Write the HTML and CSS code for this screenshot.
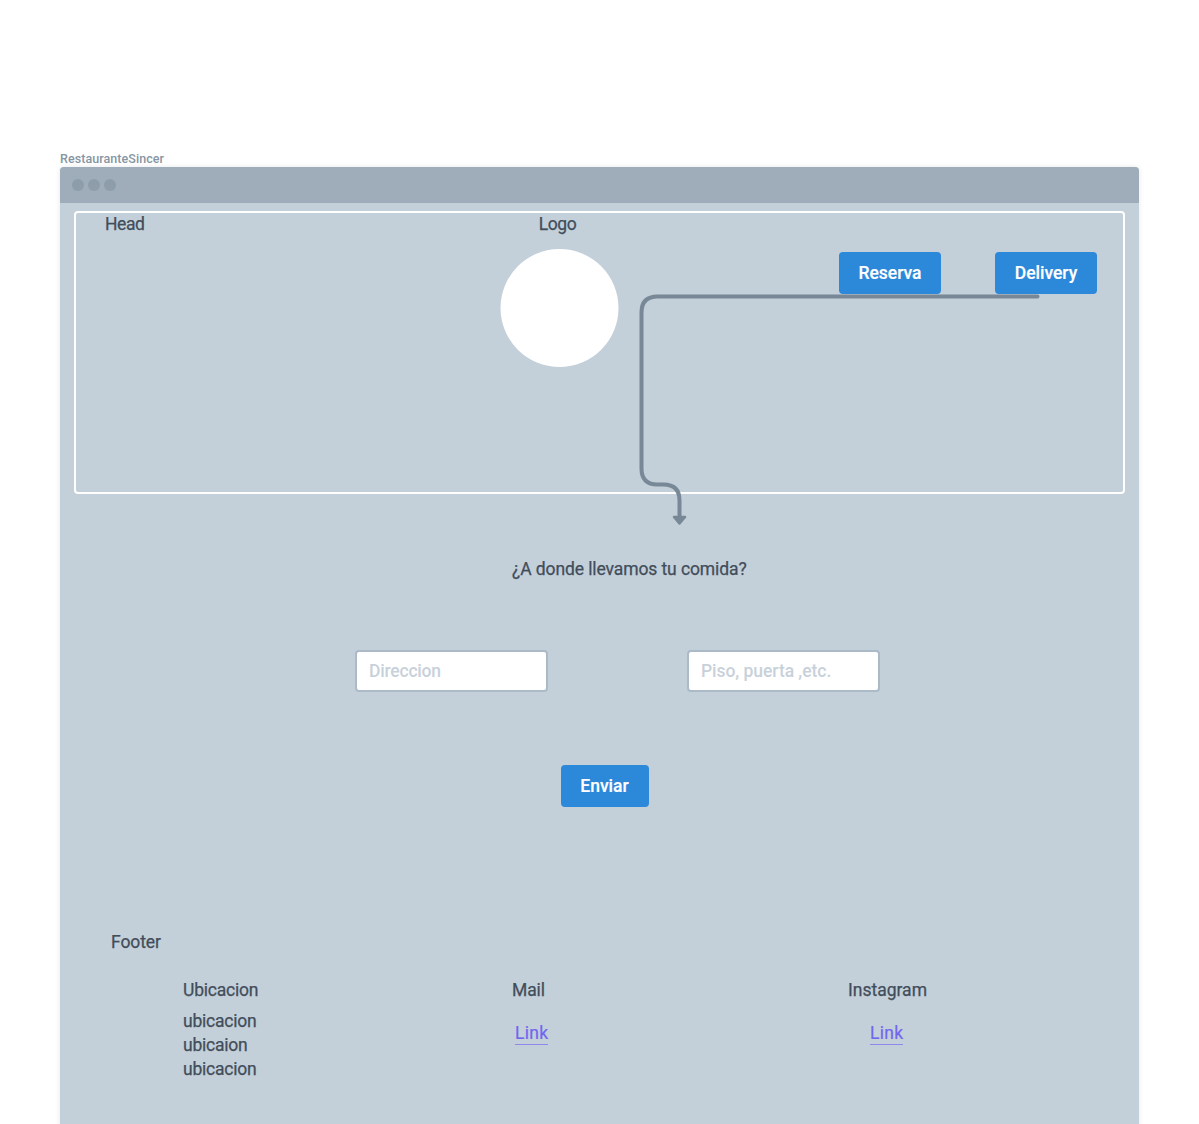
FILE: index.html
```html
<!DOCTYPE html>
<html lang="es">
<head>
<meta charset="utf-8">
<title>RestauranteSincer</title>
<link rel="stylesheet" href="styles.css">
</head>
<body>
<main class="canvas">
  <div class="frame-name"><span>RestauranteSincer</span></div>
  <section class="window">
    <div class="titlebar"><i class="dot"></i><i class="dot"></i><i class="dot"></i></div>
    <header class="head">
      <h1 class="label head-title">Head</h1>
      <div class="brand">
        <span class="label brand-name">Logo</span>
        <svg class="logo" width="119" height="119" viewBox="0 0 119 119"><circle cx="59.500" cy="59" r="59" fill="#fff"/></svg>
      </div>
      <nav class="actions">
        <button class="btn">Reserva</button>
        <button class="btn">Delivery</button>
      </nav>
    </header>
    <form class="delivery">
      <h2 class="label question">¿A donde llevamos tu comida?</h2>
      <div class="fields">
        <div class="field address">Direccion</div>
        <div class="field">Piso, puerta ,etc.</div>
      </div>
      <button class="btn send" type="button">Enviar</button>
    </form>
    <footer class="footer">
      <h2 class="label footer-title">Footer</h2>
      <div class="columns">
        <div class="column">
          <h3 class="label location">Ubicacion</h3>
          <ul class="label location places">
            <li>ubicacion</li>
            <li>ubicaion</li>
            <li>ubicacion</li>
          </ul>
        </div>
        <div class="column">
          <h3 class="label">Mail</h3>
          <a class="link mail-link">Link</a>
        </div>
        <div class="column">
          <h3 class="label instagram">Instagram</h3>
          <a class="link instagram-link">Link</a>
        </div>
      </div>
    </footer>
    <svg class="connector" width="408" height="236" viewBox="0 0 408 236">
      <path d="M401.500 5.500H21.500Q5.500 5.500 5.500 21.500V177.500Q5.500 193.500 21.500 193.500H27.500Q43.500 193.500 43.500 209.500V226" fill="none" stroke="#788896" stroke-width="4" stroke-linecap="round"/>
      <path d="M38 226H49L43.500 232.500Z" fill="#788896" stroke="#788896" stroke-width="2.500" stroke-linejoin="round"/>
    </svg>
  </section>
</main>
</body>
</html>
```
FILE: styles.css
```css
* { box-sizing: border-box; }

body {
  margin: 0;
  background: #fff;
  font-family: Roboto, "Liberation Sans", sans-serif;
  font-size: 17.5px;
  line-height: 24px;
  color: #414d59;
}

h1, h2, h3, ul { margin: 0; padding: 0; font-size: inherit; font-weight: inherit; }
ul { list-style: none; }

.canvas { height: 1124px; padding: 149px 60px 0; overflow: hidden; }
.frame-name {
  height: 18px;
  color: #8696a3;
  font-size: 12.5px;
  font-weight: 500;
  letter-spacing: .06px;
  line-height: 19px;
}

.window {
  position: relative;
  width: 1079px;
  height: 980px;
  border-radius: 4px 4px 0 0;
  background: #c3cfd9;
  box-shadow: 0 0 5px rgba(65, 77, 89, .13);
}

.titlebar {
  display: flex;
  align-items: center;
  gap: 4px;
  height: 35.5px;
  padding-left: 12px;
  border-radius: 4px 4px 0 0;
  background: #9eadb9;
}
.dot { width: 12px; height: 12px; border-radius: 50%; background: #8d9daa; }

.label { font-weight: 400; letter-spacing: -.1px; white-space: nowrap; -webkit-text-stroke: .25px; }

.head {
  display: grid;
  grid-template-columns: 424px 119px 1fr;
  width: 1051px;
  height: 283px;
  margin: 8.5px 0 0 14px;
  border: 2px solid #fff;
  border-radius: 4px;
}
.head-title { padding-left: 29px; letter-spacing: -.4px; line-height: 22px; }
.brand { display: flex; flex-direction: column; align-items: center; gap: 14px; }
.brand-name { margin-right: 4px; letter-spacing: -.4px; line-height: 22px; }
.logo { display: block; }
.actions { display: flex; justify-content: flex-end; align-items: flex-start; gap: 54px; padding: 38.5px 26px 0 0; }

.btn {
  width: 102px;
  height: 42px;
  padding: 0;
  border: 0;
  border-radius: 4px;
  background: #2c88d9;
  color: #fff;
  font: 500 17.5px/24px Roboto, "Liberation Sans", sans-serif;
  -webkit-text-stroke: .2px;
}

.delivery { display: flex; flex-direction: column; align-items: flex-start; padding-top: 62.5px; }
.question { margin-left: 452px; }
.fields { display: flex; gap: 139px; margin: 69.5px 0 0 295px; }
.field {
  width: 193px;
  height: 42px;
  padding: 7px 12px;
  border: 2px solid #acbac7;
  border-radius: 4px;
  background: #fff;
  color: #c8d1da;
  font-weight: 500;
  letter-spacing: -.05px;
  white-space: nowrap;
}
.address { letter-spacing: -.2px; }
.send { width: 88px; margin: 73px 0 0 500.5px; }

.footer { padding-top: 123px; }
.footer-title { padding-left: 51px; }
.columns { display: grid; grid-template-columns: 329px 336px 1fr; padding: 24px 0 0 123px; }
.column { display: flex; flex-direction: column; align-items: flex-start; }
.location { letter-spacing: -.22px; }
.instagram { letter-spacing: 0; }
.places { padding-top: 7px; }
.link {
  height: 24px;
  margin-top: 19px;
  border-bottom: 1px solid #9087ea;
  color: #7266ee;
  letter-spacing: .3px;
  -webkit-text-stroke: .2px;
}
.mail-link { margin-left: 3px; }
.instagram-link { margin-left: 22px; }

.connector { position: absolute; left: 576px; top: 124px; }
```
